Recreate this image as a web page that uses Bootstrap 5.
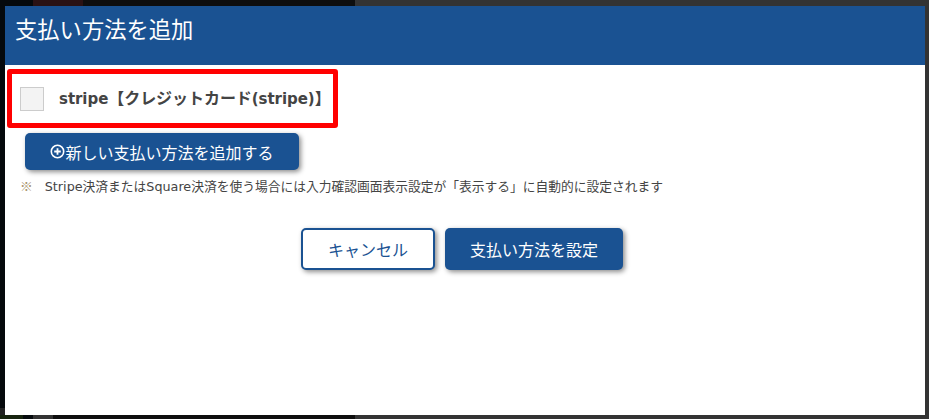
<!DOCTYPE html>
<html lang="ja">
<head>
<meta charset="utf-8">
<link href="https://cdn.jsdelivr.net/npm/bootstrap@5.3.0/dist/css/bootstrap.min.css" rel="stylesheet">
<style>
html,body{height:100%;margin:0;overflow:hidden}
body{background:#333;font-family:"DejaVu Sans","Noto Sans CJK JP",sans-serif;color:#444}
.stage{height:419px;padding:6px 4px 4px 5px;
 background:
  linear-gradient(90deg,#05090c 0 33px,#2a1214 33px 83px,#0e0e0e 83px 355px,#333 355px) top/100% 6px no-repeat,
  linear-gradient(90deg,#17240f 0 23px,#060a0d 23px 33px,#333 33px 53px,#0e0e0e 53px 355px,#333 355px) bottom/100% 4px no-repeat,
  linear-gradient(180deg,#05090c 0 408px,#222 408px) left/5px 100% no-repeat,
  #333}
.pay-modal{height:409px;background:#fff}
.pay-head{height:59px;background:#1a5292;color:#fff;font-size:22.3px;padding:0 0 14px 10px;font-family:"Noto Sans CJK JP",sans-serif;font-weight:400}
.pay-body{padding:4px 0 0 2px}
.pick-box{width:331px;height:59px;border:5px solid #f00;border-radius:3px;padding-left:8px}
.pick-check{width:24px;height:24px;background:#f3f3f3;border:1px solid #ccc;flex:none}
.pick-label{font-size:15px;font-weight:700;color:#444;margin-left:15px;padding-bottom:2px;white-space:nowrap;letter-spacing:-.05px}
.pick-kana{font-size:16px;font-family:"Noto Sans CJK JP",sans-serif}
.btn-add{margin:5px 0 0 18px;width:274px;height:37px;background:#1a5292;border:0;border-radius:5px;color:#fff;font-size:16px;box-shadow:2px 2px 5px rgba(0,0,0,.45);padding:0;font-family:"Noto Sans CJK JP",sans-serif;font-weight:400}
.note{font-size:12.75px;height:18px;margin:8px 0 0 13px;color:#444;line-height:18px;white-space:nowrap}
.note i{font-style:normal;font-family:"Noto Sans CJK JP",sans-serif;color:#a8926a;margin-right:12px;line-height:1}
.acts{margin-top:32px;gap:10px;padding-right:8px}
.btn-c,.btn-s{height:42px;border-radius:5px;font-size:16px;box-shadow:2px 2px 5px rgba(0,0,0,.45);padding:0;font-family:"Noto Sans CJK JP",sans-serif;font-weight:400}
.btn-c{width:134px;background:#fff;border:2px solid #1a5292;color:#1a5292}
.btn-s{width:178px;background:#1a5292;border:0;color:#fff}
</style>
</head>
<body>
<div class="stage">
  <div class="pay-modal">
    <div class="pay-head d-flex align-items-center">支払い方法を追加</div>
    <div class="pay-body">
      <div class="pick-box d-flex align-items-center">
        <span class="pick-check"></span>
        <span class="pick-label">stripe<span class="pick-kana">【クレジットカード</span>(stripe)<span class="pick-kana">】</span></span>
      </div>
      <button type="button" class="btn btn-add d-flex align-items-center justify-content-center">
        <svg width="15" height="15" viewBox="0 0 15 15" fill="none" stroke="#fff"><circle cx="7.5" cy="7.5" r="6.2" stroke-width="1.6"/><path d="M4.2 7.5h6.6M7.5 4.2v6.6" stroke-width="1.8"/></svg>新しい支払い方法を追加する
      </button>
      <p class="note"><i>※</i>Stripe決済またはSquare決済を使う場合には入力確認画面表示設定が「表示する」に自動的に設定されます</p>
      <div class="acts d-flex justify-content-center">
        <button type="button" class="btn btn-c">キャンセル</button>
        <button type="button" class="btn btn-s">支払い方法を設定</button>
      </div>
    </div>
  </div>
</div>
</body>
</html>
